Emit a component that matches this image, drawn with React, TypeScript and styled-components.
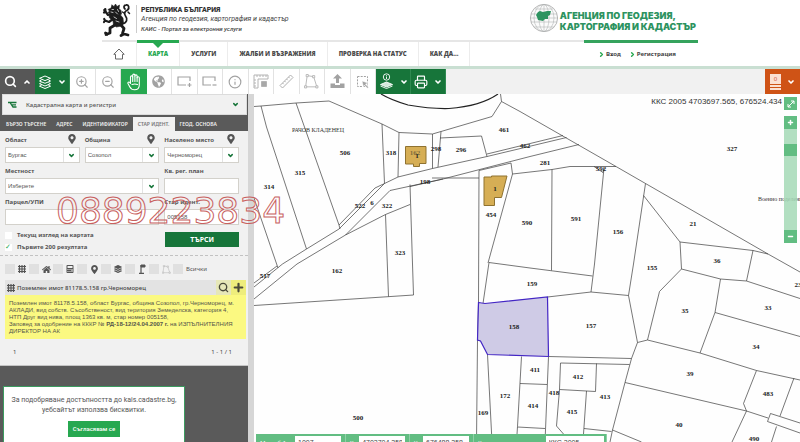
import React from "react";
import styled, { createGlobalStyle, css } from "styled-components";
import {
  ChevronDown, ChevronUp, ChevronRight, Search, ZoomIn, ZoomOut, Info, Printer, Plus, Minus,
} from "lucide-react";
import {
  FaGlobeAmericas, FaHome, FaMapMarkerAlt, FaCalculator, FaLayerGroup,
} from "react-icons/fa";

const GlobalStyle = createGlobalStyle`
  *, *::before, *::after { box-sizing: border-box; }
  body { margin: 0; background: #fff; color: #444; font-family: "Noto Sans", sans-serif; font-size: 7px; overflow: hidden; }
  button, input, select { font: inherit; color: inherit; margin: 0; padding: 0; border-radius: 0; }
  a { color: inherit; text-decoration: none; }
  svg { display: block; flex: none; }
`;

const green = "#17753a";
const bright = "#27a850";
const soft = "#62bd82";

const Page = styled.div`
  position: relative;
  display: flex;
  flex-direction: column;
  height: 100vh;
`;

/* ---------- header ---------- */
const Header = styled.header`
  border-bottom: 3px solid #c9dfd2;
`;
const HeaderInner = styled.div`
  max-width: 596px;
  margin: 0 auto;
`;
const BrandRow = styled.div`
  display: flex;
  justify-content: space-between;
  height: 40px;
`;
const Brand = styled.a`
  display: flex;
  align-items: flex-start;
`;
const BrandText = styled.span`
  display: flex;
  flex-direction: column;
  margin: 5px 0 0 4px;
  padding-left: 4px;
  border-left: 1px solid #ccc;
  font-family: Roboto, sans-serif;
  line-height: 9px;
  color: #444;
`;
const BrandTitle = styled.strong`
  font-size: 7px;
  line-height: 10px;
  font-weight: 900;
  color: #333;
`;
const BrandLine = styled.span<{ $small?: boolean }>`
  font-size: ${(p) => (p.$small ? 6 : 7)}px;
  font-weight: ${(p) => (p.$small ? 500 : 400)};
  font-style: italic;
`;
const AgencyText = styled.strong`
  padding-top: 10px;
  margin: 0 2px 0 1px;
  font-family: Inter, sans-serif;
  font-size: 9px;
  font-weight: 900;
  line-height: 11px;
  color: #2d9360;
`;
const Rule = styled.div`
  display: flex;
  justify-content: flex-end;
  height: 2px;
  background: #e6e6e6;
`;
const RuleAccent = styled.span`
  width: 114px;
  height: 3px;
  background: #35a35d;
`;
const Nav = styled.nav`
  display: flex;
  align-items: stretch;
  height: 24px;
`;
const NavItem = styled.a<{ $active?: boolean }>`
  position: relative;
  display: flex;
  align-items: center;
  padding: 0 11px;
  border-right: 1px solid #ececec;
  font-family: "Open Sans", sans-serif;
  font-size: 6px;
  font-weight: 800;
  white-space: nowrap;
  color: ${(p) => (p.$active ? bright : "#4a4a4a")};
  ${(p) =>
    p.$active &&
    css`
      &::before {
        content: "";
        position: absolute;
        left: 0;
        right: 0;
        top: -2px;
        height: 3px;
        background: ${bright};
      }
      &::after {
        content: "";
        position: absolute;
        left: calc(50% - 5px);
        top: 1px;
        border: 5px solid transparent;
        border-top-color: ${bright};
        border-bottom: 0;
      }
    `}
`;
const Account = styled.div`
  display: flex;
  align-items: center;
  gap: 8px;
  margin-left: auto;
  padding-right: 22px;
`;
const AccountLink = styled.a`
  display: flex;
  align-items: center;
  gap: 1px;
  font-size: 6px;
  font-weight: 700;
  svg { color: ${bright}; }
`;

/* ---------- toolbar ---------- */
const Toolbar = styled.div`
  display: flex;
  height: 25px;
  background: #f1f1f1;
`;
const Tools = styled.div`
  display: grid;
  grid-template-columns: repeat(12, 1fr);
  width: 306px;
`;
const tones = {
  plain: css`background: #fff; color: #a2a2a2; border-right: 1px solid #e2e2e2;`,
  active: css`background: ${bright}; color: #fff;`,
  dark: css`background: #575757; color: #fff;`,
  green: css`background: ${green}; color: #fff; border-right: 1px solid #2f8a51;`,
  orange: css`background: #cf5316; color: #fff; margin-left: auto;`,
};
const ToolButton = styled.button<{ $tone: keyof typeof tones }>`
  display: flex;
  align-items: center;
  justify-content: center;
  border: 0;
  ${(p) => tones[p.$tone]}
`;
const MenuButton = styled(ToolButton)`
  width: 35px;
  gap: 6px;
  flex: none;
`;
const Badge = styled.span`
  display: flex;
  flex-direction: column;
  gap: 1px;
  width: 11px;
  font-size: 6px;
  line-height: 10px;
  color: #d0533a;
  b { background: #fbe0d3; font-weight: 400; }
  i { height: 2px; background: #fbe0d3; }
`;

/* ---------- sidebar ---------- */
const Body = styled.div`
  display: flex;
  flex: 1;
  min-height: 0;
`;
const Sidebar = styled.aside`
  width: 248px;
  flex: none;
  background: #5a5a5a;
`;
const Gutter = styled.div`
  width: 6px;
  flex: none;
  background: #d6d6d6;
`;
const SourcePicker = styled.button`
  display: flex;
  align-items: center;
  gap: 9px;
  width: calc(100% - 3px);
  height: 21px;
  margin: 0 1px 0 2px;
  padding: 0 7px 0 5px;
  border: 1px solid #dcdcdc;
  background: #f1f1f1;
  font-size: 6px;
  font-weight: 500;
  color: #555;
  svg:last-child { margin-left: auto; color: ${green}; }
`;
const Tabs = styled.div`
  display: flex;
  align-items: stretch;
  height: 16px;
  padding: 2px 0 0 1px;
`;
const Tab = styled.button<{ $active?: boolean }>`
  padding: 0 5px;
  border: 0;
  font-size: 5px;
  font-weight: 600;
  white-space: nowrap;
  background: ${(p) => (p.$active ? "#f1f1f1" : "transparent")};
  color: ${(p) => (p.$active ? "#777" : "#f0f0f0")};
`;
const Panel = styled.div`
  padding-bottom: 4px;
  background: #f1f1f1;
  border-bottom: 1px solid #c4c4c4;
`;
const Form = styled.form`
  display: grid;
  grid-template-columns: repeat(3, 1fr);
  gap: 2px 5px;
  padding: 3px 9px 2px 5px;
  border-bottom: 1px dashed #c2c2c2;
`;
const Field = styled.div<{ $wide?: boolean }>`
  display: flex;
  flex-direction: column;
  gap: 1px;
  grid-column: span ${(p) => (p.$wide ? 2 : 1)};
  min-width: 0;
`;
const FieldHead = styled.label`
  display: flex;
  justify-content: space-between;
  align-items: center;
  height: 12px;
  padding-right: 3px;
  font-size: 6px;
  font-weight: 700;
  color: #555;
  svg { align-self: flex-start; }
`;
const control = css`
  grid-area: 1 / 1;
  width: 100%;
  height: 16px;
  padding: 0 2px;
  border: 1px solid #d3d1cb;
  background: #fff;
  font-family: "Liberation Sans", sans-serif;
  font-size: 6px;
  color: #555;
`;
const TextInput = styled.input`
  ${control}
`;
const SelectWrap = styled.span`
  display: grid;
  align-items: center;
`;
const Select = styled.select`
  ${control}
  appearance: none;
`;
const SelectArrow = styled.span`
  grid-area: 1 / 1;
  justify-self: end;
  display: flex;
  align-items: center;
  justify-content: center;
  width: 17px;
  height: 14px;
  border-left: 1px solid #e2e2e2;
  color: ${green};
  pointer-events: none;
`;
const Checks = styled.div`
  grid-column: span 2;
  padding-top: 2px;
`;
const CheckLabel = styled.label`
  display: flex;
  align-items: center;
  gap: 5px;
  height: 12px;
  font-size: 6px;
  font-weight: 700;
  color: #555;
`;
const CheckBox = styled.input<{ $grey?: boolean }>`
  appearance: none;
  width: ${(p) => (p.$grey ? 10 : 7)}px;
  height: ${(p) => (p.$grey ? 10 : 7)}px;
  flex: none;
  background: ${(p) => (p.$grey ? "#e0e0e0" : "#fff")};
  &:checked::before {
    content: "✓";
    display: block;
    font: 700 7px/7px "DejaVu Sans", sans-serif;
    color: ${bright};
  }
`;
const Submit = styled.button`
  height: 15px;
  margin: 5px 0 0 1px;
  border: 0;
  background: ${green};
  color: #fff;
  font-weight: 700;
  font-size: 7px;
`;
const Filters = styled.div`
  display: flex;
  align-items: center;
  height: 24px;
  padding: 2px 5px 0;
`;
const Filter = styled.label`
  display: flex;
  align-items: center;
  gap: 3px;
  width: 24px;
  font-size: 6px;
  color: #555;
`;
const Result = styled.article`
  margin: 0 2px 0 5px;
`;
const ResultHead = styled.header`
  display: flex;
  align-items: center;
  height: 15px;
  padding-left: 2px;
  background: #e3e3e3;
`;
const ResultTitle = styled.h2`
  flex: 1;
  margin: 0 0 0 2px;
  font-size: 6px;
  font-weight: 500;
  color: #444;
`;
const ResultAction = styled.button<{ $lit?: boolean }>`
  display: flex;
  align-items: center;
  justify-content: center;
  width: 15px;
  height: 15px;
  border: 0;
  background: ${(p) => (p.$lit ? "#eeed7c" : "#e6e7b8")};
  color: #4a4a3a;
`;
const ResultBody = styled.p`
  margin: 0;
  padding: 5px 4px 4px;
  background: #fbf981;
  font-family: "Liberation Sans", sans-serif;
  font-size: 6px;
  line-height: 7px;
  color: #55554a;
`;
const Pager = styled.div`
  display: flex;
  justify-content: space-between;
  padding: 8px 16px 4px 13px;
  line-height: 10px;
  font-size: 6px;
`;

/* ---------- overlays ---------- */
const Cookie = styled.section`
  position: absolute;
  left: 3px;
  bottom: -6px;
  width: 182px;
  padding: 8px 4px 10px;
  border: 1px solid #3c9b60;
  background: #fff;
  text-align: center;
  font-family: Roboto, sans-serif;
  font-size: 7px;
  line-height: 10px;
  color: #555;
  p { margin: 0 0 6px; }
`;
const CookieButton = styled.button`
  width: 52px;
  height: 16px;
  border: 0;
  background: ${bright};
  color: #fff;
  font-size: 6px;
  font-weight: 500;
`;
const Phone = styled.div`
  position: absolute;
  left: 56px;
  top: 190px;
  font-family: "DejaVu Sans", sans-serif;
  font-size: 36px;
  line-height: 41px;
  color: transparent;
  -webkit-text-stroke: 1px #c8605e;
  pointer-events: none;
`;

/* ---------- map ---------- */
const MapArea = styled.main`
  position: relative;
  flex: 1;
  min-width: 0;
  overflow: hidden;
  background: #fefefe;
`;
const MapSvg = styled.svg`
  width: 100%;
  height: 100%;
  font-family: "Liberation Serif", serif;
  text-anchor: middle;
`;
const ParcelNumber = styled.text`
  font-size: 7px;
  font-weight: 700;
  fill: #222;
`;
const PlaceName = styled.text`
  font-size: 6px;
  fill: #333;
`;
const Coordinates = styled.output`
  position: absolute;
  top: 3px;
  right: 18px;
  font-family: "Liberation Sans", sans-serif;
  font-size: 8px;
  line-height: 10px;
  color: #333;
`;
const ZoomBar = styled.div`
  position: absolute;
  top: 3px;
  right: 3px;
  width: 13px;
`;
const ZoomButton = styled.button<{ $gap?: boolean }>`
  display: flex;
  align-items: center;
  justify-content: center;
  width: 13px;
  height: 13px;
  margin-bottom: ${(p) => (p.$gap ? 6 : 0)}px;
  border: 0;
  background: ${soft};
  color: #fff;
`;
const ZoomTrack = styled.div`
  height: 101px;
  padding-top: 15px;
  background: #a5d9b6d9;
`;
const ZoomHandle = styled.div`
  height: 12px;
  background: ${soft};
`;
const StatusBar = styled.div`
  position: absolute;
  left: 2px;
  bottom: -9px;
  display: grid;
  grid-template-columns: 90px 64px 64px 133px;
  height: 17px;
  background: ${soft};
  color: #fff;
  font-size: 6px;
`;
const StatusCell = styled.label`
  display: flex;
  align-items: center;
  justify-content: space-between;
  gap: 4px;
  padding: 1px 4px;
  border-right: 1px solid #8fd0a6;
  white-space: nowrap;
`;
const StatusInput = styled.input<{ $wide?: boolean }>`
  width: ${(p) => (p.$wide ? 58 : 46)}px;
  height: 13px;
  padding: 0 3px;
  border: 0;
  background: #fff;
  color: #444;
  font-family: "Liberation Sans", sans-serif;
  font-size: 7px;
`;

/* ---------- drawings ---------- */
const Lion = () => (
  <svg width="30" height="38" viewBox="0 0 30 38" fill="#1c1c1c" stroke="#1c1c1c" strokeLinecap="round" strokeLinejoin="round">
    <path d="M10 5l2 1.500L13.500 4l1.500 2.500L17.500 5l-.5 3.500 2 2 .5 3.500-1 1 2.500 3 .5 5-2 3-5 1-3-2-.5-4-2-1.500L7 17l1-3-2-1.500L7.500 11 6 9.500 9 8z" strokeWidth=".6" />
    <path d="M10 14L6 15 3.500 11.500M3.500 11.500L2.200 10M3.500 11.500l-.2-2.500M3.500 11.500L2 12.500M11 19l-4 3-4-1.500M3 20.500L2.200 19M3 20.500l-1 1.500" fill="none" strokeWidth="2.200" />
    <path d="M13 25l-5 3v5l-4 1.500M5 34.500l-1.500-1.500M19 25l3 3.500-1.500 5 5.500 1.500M21 34.500l-2 1" fill="none" strokeWidth="2.800" />
    <path d="M20 24c5-1 6-5 3.500-8-2-2.500-.5-5 2-6 2.500-2 1-5.500-1.500-5-2.500.3-2.500 3-1 4" fill="none" strokeWidth="1.800" />
    <path d="M26 12l1.500 1.500M22 13l-1.500-1" fill="none" strokeWidth="1.500" />
    <path d="M10 9.500h1.500M9 12l2 .5M13.500 12l2 2M12 17l2.500 1.500M14 21l3 1M15.500 9.500l1 2" fill="none" stroke="#fff" strokeWidth=".7" />
  </svg>
);

const Globe = () => (
  <svg width="30" height="34" viewBox="0 0 30 34" fill="none" stroke="#b2b6b5" strokeWidth=".6">
    <circle cx="15" cy="18" r="13.600" fill="#fbfbfb" stroke="#888" />
    <ellipse cx="15" cy="18" rx="5" ry="13.600" />
    <ellipse cx="15" cy="18" rx="10" ry="13.600" />
    <path d="M15 4v28M2 14h26M1.500 18h27M2 22h26M5 27h20M6 9h18" />
    <path d="M9 12l2-1 3 1 4-1h4l-1 4-2 1v3h-3l-2 2-5-1-1-3-1-2z" fill="#2d9360" stroke="none" />
  </svg>
);

const GridIcon = () => (
  <svg width="8" height="8" viewBox="0 0 8 8" stroke="#555" strokeWidth="1.200">
    <path d="M1.500 0v8M4 0v8M6.500 0v8M0 1.500h8M0 4h8M0 6.500h8" />
  </svg>
);
const PlotIcon = ({ size = 15 }: { size?: number }) => (
  <svg width={size} height={size} viewBox="0 0 14 14" fill="none" stroke="#b0b0b0" strokeWidth=".8">
    <path d="M3 1.500L9 2.500 12 12 1.500 12z" />
    <path d="M2 .5h2v2H2zM8 1.500h2v2H8zM11 11h2v2h-2zM.5 11h2v2h-2z" fill="#fff" />
  </svg>
);
const FlagIcon = () => (
  <svg width="8" height="10" viewBox="0 0 8 10" fill="none" stroke="#555">
    <path d="M3 9V1M1 9.400h5" strokeWidth="1.200" />
    <path d="M3 1h4v2H3z" fill="#555" />
  </svg>
);
const AreaIcon = ({ minus }: { minus?: boolean }) => (
  <svg width="15" height="13" viewBox="0 0 15 13" fill="none" stroke="#a2a2a2" strokeWidth="1.200">
    <path d="M13 6V2H1v8h8" />
    <path d={minus ? "M10.500 10h4" : "M10.500 10h4M12.500 8v4"} />
  </svg>
);
const HandIcon = () => (
  <svg width="14" height="18" viewBox="0 0 14 18" fill="none" stroke="#fff" strokeWidth="1.100" strokeLinejoin="round" strokeLinecap="round">
    <path d="M3.500 9V4a1.100 1.100 0 0 1 2.200 0V2.200a1.100 1.100 0 0 1 2.200 0V3a1.100 1.100 0 0 1 2.200 0v1.800a1.100 1.100 0 0 1 2.200 0V12c0 3-2 4.800-4.800 4.800-2.500 0-3.800-1-4.800-3L1 10.500c-.5-1.300 1-2 1.800-1l.7 1z" />
    <path d="M5.700 4v4.500M7.900 3v5.500M10.100 4.500v4M5 11.500c2-.8 3.500-.8 5.500 0" />
  </svg>
);
const RulersIcon = () => (
  <svg width="16" height="15" viewBox="0 0 16 15" fill="none" stroke="#b4b4b4">
    <path d="M1 1h14v4H5v9H1zM4 1v2M7 1v2M10 1v2M13 1v2M1 6h2M1 9h2M1 12h2" />
    <path d="M8.500 7.500h5v5h-5z" fill="#a8a8a8" />
  </svg>
);
const RulerIcon = () => (
  <svg width="15" height="15" viewBox="0 0 15 15" fill="none" stroke="#b0b0b0">
    <path d="M1 11.500L11.500 1 14 3.500 3.500 14zM3.500 9l1.200 1.200M5.500 7l1.200 1.200M7.500 5l1.200 1.200M9.500 3l1.200 1.200" />
  </svg>
);
const UploadIcon = () => (
  <svg width="15" height="15" viewBox="0 0 15 15" fill="#a2a2a2">
    <path d="M7.500 0L12 4.500H9V9H6V4.500H3zM.5 9.500H5v1.500h5V9.500h4.500V14H.5z" />
  </svg>
);
const MarqueeIcon = () => (
  <svg width="14" height="14" viewBox="0 0 14 14" fill="none" stroke="#a2a2a2">
    <path d="M1.500 1.500h10v10h-10z" strokeDasharray="2 1.200" />
    <path d="M6 6l6 2-2.500 1.200 3 3-1 1-3-3L7.500 12z" fill="#a2a2a2" stroke="#fff" strokeWidth=".5" />
  </svg>
);
const StackIcon = () => (
  <svg width="14" height="14" viewBox="0 0 14 14" fill="none" stroke="#fff" strokeLinejoin="round">
    <path d="M7 1l5.500 2.300L7 5.600 1.500 3.300zM3.500 5L1.500 6 7 8.300 12.500 6l-2-1M3.500 7.700l-2 1L7 11l5.500-2.300-2-1M3.500 10.300l-2 .9L7 13.500l5.500-2.300-2-.9" />
  </svg>
);
const LayerInfoIcon = () => (
  <svg width="15" height="17" viewBox="0 0 15 17" fill="none" stroke="#fff" strokeWidth=".9">
    <circle cx="7.500" cy="4" r="3.200" />
    <path d="M7.500 3.500v2.500M7.500 2v.8" />
    <path d="M7.500 9l6 2.500-6 2.500-6-2.500z" fill="#d4e8db" />
    <path d="M1.500 13l6 2.500 6-2.500" />
  </svg>
);
const HomeIcon = () => (
  <svg width="12" height="12" viewBox="0 0 12 12" fill="none" stroke="#666">
    <path d="M.8 6.300L6 1l5.200 5.300H9.500V11h-7V6.300z" />
  </svg>
);
const BranchIcon = () => (
  <svg width="9" height="8" viewBox="0 0 9 8" fill="none" stroke={green} strokeWidth="1.300">
    <path d="M0 1.500h8.500M2 1.500l3 4.500h3.500M4 3.800h4" />
  </svg>
);

const parcels = [
  "254,106.500 261,106 296,103 329,101 382,124 399,132.500 432.500,134 441,131.500 492,116.500 501.500,101.500 500.500,94",
  "501.500,101.500 520,111.500 616,166.500 645.500,183.500 768,254 800,272",
  "261,106 266.500,127 306.500,249", "296,103 339,225 340,229", "254,198 278,268",
  "382,124 384.500,183.500 375,188 339,225", "384.500,183.500 339,229 306.500,249 282.500,264 254,287",
  "254,283 277,266", "384.500,183.500 398,177 432.500,168.500 487,156.500 566.500,137.500", "487,154 563,135.500",
  "345.500,235 390,190.500 443,179 530,156.500 579,144.500", "345.500,235 297,264 254,299",
  "432,178 479,178", "410,186.500 443,179", "410,184.500 412.500,264 413.500,295 254,305.500",
  "345.500,235 385.500,214.500 410,204.500", "385.500,214.500 388.500,296.500",
  "399,132.500 398,177", "432.500,134 432.500,168.500", "441,131.500 438,167", "440,138 481.500,136 487,156.500",
  "479,170.500 511,163 512.500,174 488,263", "479,170.500 478.500,302.500 477.500,340 476.500,442",
  "512.500,174 552,169.500 570,166.500 616,166.500", "552,169.500 551.500,270.500", "594,166.500 603,172.500 604,168 594.500,264 591,292",
  "645.500,183.500 633.500,264 628.500,295.500", "643.500,195.500 680,242 753,250.500 768,254", "680,242 681.500,269 659.500,291.500 647.500,340",
  "753,250.500 746.500,281", "483,303.500 489,262.500 530,268 592.500,276",
  "547.500,297 591,292 628.500,295.500 637.500,342.500 647.500,340 700,353 756.500,370.500 800,380",
  "681.500,269 720.500,279 746.500,281 800,298.500", "720.500,279 715,312.500 700,353", "715,312.500 800,336.500",
  "637.500,342.500 631.500,358.500 625,382.500 612.500,430 610,442", "548.500,356.500 631.500,358.500", "560.500,363 629.500,364.500",
  "560.500,363 559.500,389.500 595.500,391.500 596.500,363.500", "559.500,389.500 556.500,426 563.500,434", "586.500,391 583.500,434",
  "584,428.500 611.500,431.500", "612.500,430 641.500,442", "521.500,356.500 517.500,426.500 516.500,442", "548.500,356.500 545,442",
  "520,383.500 547,384.500", "517.500,427 545,428.500", "487.500,354.500 492,442",
  "625,382.500 746.500,411 768,418", "756.500,370.500 743.500,403.500 746.500,411 732,442", "794,378 780,416",
  "800,423 770.500,413.500 767.500,421.500 800,433", "776.500,426.500 771.500,442",
];

const labels: [number, number, string][] = [
  [345, 152, "506"], [300, 172, "315"], [269, 186, "314"], [391, 152, "318"], [436, 148, "298"],
  [461, 149, "296"], [504, 129, "461"], [525, 145, "462"], [545, 162, "281"], [601, 168, "592"], [732, 148, "327"],
  [425, 181, "198"], [360, 205, "522"], [372, 202, "6"], [387, 205, "322"], [491, 214, "454"], [527, 222, "590"],
  [576, 218, "591"], [618, 231, "156"], [693, 223, "21"], [400, 252, "323"], [717, 260, "36"], [337, 270, "162"],
  [265, 275, "517"], [532, 283, "159"], [652, 267, "155"], [798, 284, "23"], [768, 307, "33"], [685, 310, "35"],
  [591, 325, "157"], [514, 326, "158"], [756, 346, "34"], [690, 373, "39"], [535, 369, "411"], [578, 376, "412"],
  [554, 392, "418"], [605, 396, "413"], [505, 395, "172"], [768, 393, "483"], [533, 405, "414"], [572, 411, "415"],
  [483, 412, "169"], [358, 417, "500"], [679, 424, "40"], [754, 438, "490"], [495, 188, "1"],
];

const CadastralMap = () => (
  <MapSvg viewBox="254 94 546 348" preserveAspectRatio="xMinYMin slice" role="img" aria-label="Кадастрална карта">
    <g fill="none" stroke="#3c3c3c" strokeWidth=".7">
      {parcels.map((p) => <polyline key={p} points={p} />)}
    </g>
    <path d="M381 94Q391 100 408 105Q431 109 449 108.500Q481 106 498 94" fill="none" stroke="#222" strokeWidth="1.200" />
    <polygon points="478.500,302.500 485,303.500 547.500,297 548.500,356.500 487.500,354.500 480.500,341 477.500,340" fill="#cfcbe6" stroke="#4326c4" strokeWidth="1.200" />
    <g fill="#d6ae55" stroke="#8f7230">
      <polygon points="405.500,146.500 426,146.500 426,163.500 419.500,163.500 419.500,166.500 413.500,166.500 413.500,164 405.500,164" />
      <polygon points="484,177 491.500,177 491.500,176 507,176 501.500,197.500 494.500,197.500 494.500,205.500 484,205.500" />
    </g>
    <ParcelNumber x="415" y="155" fillOpacity=".5">162</ParcelNumber>
    <ParcelNumber x="417" y="158">1</ParcelNumber>
    {labels.map(([x, y, t]) => <ParcelNumber key={`${x}-${y}`} x={x} y={y + 3}>{t}</ParcelNumber>)}
    <PlaceName x="318" y="132">РАЧОВ КЛАДЕНЕЦ</PlaceName>
    <PlaceName x="758" y="201" textAnchor="start">Военно поделение</PlaceName>
  </MapSvg>
);

const SelectField = ({ id, label, value, wide, pin }: { id: string; label: string; value: string; wide?: boolean; pin?: boolean }) => (
  <Field $wide={wide}>
    <FieldHead htmlFor={id}>{label}{pin && <FaMapMarkerAlt size={10} />}</FieldHead>
    <SelectWrap>
      <Select id={id} defaultValue={value}><option>{value}</option></Select>
      <SelectArrow><ChevronDown size={7} strokeWidth={5} /></SelectArrow>
    </SelectWrap>
  </Field>
);
const TextField = ({ id, label, value, wide }: { id: string; label: string; value?: string; wide?: boolean }) => (
  <Field $wide={wide}>
    <FieldHead htmlFor={id}>{label}</FieldHead>
    <TextInput id={id} defaultValue={value} />
  </Field>
);

const filters: [string, React.ReactNode][] = [
  ["Имоти", <GridIcon />], ["Сгради", <FaHome size={9} />], ["Обекти", <FaCalculator size={8} />],
  ["Адреси", <FaMapMarkerAlt size={9} />], ["Слоеве", <FaLayerGroup size={8} />], ["Точки", <FlagIcon />],
  ["Контури", <PlotIcon size={9} />],
];

export default function App() {
  return (
    <Page lang="bg">
      <GlobalStyle />
      <Header>
        <HeaderInner>
          <BrandRow>
            <Brand href="#">
              <Lion />
              <BrandText>
                <BrandTitle>РЕПУБЛИКА БЪЛГАРИЯ</BrandTitle>
                <BrandLine>Агенция по геодезия, картография и кадастър</BrandLine>
                <BrandLine $small>КАИС - Портал за електронни услуги</BrandLine>
              </BrandText>
            </Brand>
            <Brand href="#">
              <Globe />
              <AgencyText>АГЕНЦИЯ ПО ГЕОДЕЗИЯ,<br />КАРТОГРАФИЯ И КАДАСТЪР</AgencyText>
            </Brand>
          </BrandRow>
          <Rule><RuleAccent /></Rule>
          <Nav>
            <NavItem href="#" aria-label="Начало"><HomeIcon /></NavItem>
            <NavItem href="#" $active>КАРТА</NavItem>
            <NavItem href="#">УСЛУГИ</NavItem>
            <NavItem href="#">ЖАЛБИ И ВЪЗРАЖЕНИЯ</NavItem>
            <NavItem href="#">ПРОВЕРКА НА СТАТУС</NavItem>
            <NavItem href="#">КАК ДА...</NavItem>
            <Account>
              <AccountLink href="#"><ChevronRight size={7} strokeWidth={5} />Вход</AccountLink>
              <AccountLink href="#"><ChevronRight size={7} strokeWidth={5} />Регистрация</AccountLink>
            </Account>
          </Nav>
        </HeaderInner>
      </Header>

      <Toolbar>
        <MenuButton $tone="dark" aria-label="Търсене"><Search size={13} strokeWidth={3} /><ChevronUp size={8} strokeWidth={5} /></MenuButton>
        <MenuButton $tone="green" aria-label="Слоеве"><StackIcon /><ChevronDown size={8} strokeWidth={5} /></MenuButton>
        <Tools>
          <ToolButton $tone="plain" aria-label="Приближи"><ZoomIn size={14} /></ToolButton>
          <ToolButton $tone="plain" aria-label="Отдалечи"><ZoomOut size={14} /></ToolButton>
          <ToolButton $tone="active" aria-label="Местене"><HandIcon /></ToolButton>
          <ToolButton $tone="plain" aria-label="Цяла карта"><FaGlobeAmericas size={13} /></ToolButton>
          <ToolButton $tone="plain" aria-label="Добави област"><AreaIcon /></ToolButton>
          <ToolButton $tone="plain" aria-label="Махни област"><AreaIcon minus /></ToolButton>
          <ToolButton $tone="plain" aria-label="Информация"><Info size={14} /></ToolButton>
          <ToolButton $tone="plain" aria-label="Мерки"><RulersIcon /></ToolButton>
          <ToolButton $tone="plain" aria-label="Разстояние"><RulerIcon /></ToolButton>
          <ToolButton $tone="plain" aria-label="Площ"><PlotIcon /></ToolButton>
          <ToolButton $tone="plain" aria-label="Качване"><UploadIcon /></ToolButton>
          <ToolButton $tone="plain" aria-label="Избор"><MarqueeIcon /></ToolButton>
        </Tools>
        <MenuButton $tone="green" aria-label="Информация за слой"><LayerInfoIcon /><ChevronDown size={8} strokeWidth={5} /></MenuButton>
        <MenuButton $tone="green" aria-label="Печат"><Printer size={14} /><ChevronDown size={8} strokeWidth={5} /></MenuButton>
        <MenuButton $tone="orange" aria-label="Заявки"><Badge><b>0</b><i /><i /></Badge><ChevronDown size={8} strokeWidth={5} /></MenuButton>
      </Toolbar>

      <Body>
        <Sidebar>
          <SourcePicker><BranchIcon />Кадастрална карта и регистри<ChevronDown size={7} strokeWidth={5} /></SourcePicker>
          <Tabs>
            <Tab>БЪРЗО ТЪРСЕНЕ</Tab><Tab>АДРЕС</Tab><Tab>ИДЕНТИФИКАТОР</Tab><Tab $active>СТАР ИДЕНТ.</Tab><Tab>ГЕОД. ОСНОВА</Tab>
          </Tabs>
          <Panel>
            <Form onSubmit={(e) => e.preventDefault()}>
              <SelectField id="oblast" label="Област" value="Бургас" pin />
              <SelectField id="obshtina" label="Община" value="Созопол" pin />
              <SelectField id="place" label="Населено място" value="Черноморец" pin />
              <SelectField id="area" label="Местност" value="Изберете" wide />
              <TextField id="plan" label="Кв. рег. план" />
              <TextField id="parcel" label="Парцел/УПИ" wide />
              <TextField id="old" label="Стар идент." value="005158" />
              <Checks>
                <CheckLabel><CheckBox type="checkbox" />Текущ изглед на картата</CheckLabel>
                <CheckLabel><CheckBox type="checkbox" defaultChecked />Първите 200 резултата</CheckLabel>
              </Checks>
              <Submit>ТЪРСИ</Submit>
            </Form>
            <Filters>
              {filters.map(([name, icon]) => (
                <Filter key={name}><CheckBox type="checkbox" $grey aria-label={name} />{icon}</Filter>
              ))}
              <Filter><CheckBox type="checkbox" $grey />Всички</Filter>
            </Filters>
            <Result>
              <ResultHead>
                <GridIcon />
                <ResultTitle>Поземлен имот 81178.5.158 гр.Черноморец</ResultTitle>
                <ResultAction aria-label="Покажи"><Search size={11} strokeWidth={3} /></ResultAction>
                <ResultAction $lit aria-label="Добави"><Plus size={13} strokeWidth={4} /></ResultAction>
              </ResultHead>
              <ResultBody>
                Поземлен имот 81178.5.158, област Бургас, община Созопол, гр.Черноморец, м. АКЛАДИ, вид собств. Съсобственост, вид територия Земеделска, категория 4, НТП Друг вид нива, площ 1363 кв. м, стар номер 005158,<br />
                Заповед за одобрение на КККР № <b>РД-18-12/24.04.2007 г.</b> на ИЗПЪЛНИТЕЛНИЯ ДИРЕКТОР НА АК
              </ResultBody>
            </Result>
            <Pager><span>1</span><span>1 - 1 / 1</span></Pager>
          </Panel>
        </Sidebar>
        <Gutter />
        <MapArea>
          <CadastralMap />
          <Coordinates>ККС 2005 4703697.565, 676524.434</Coordinates>
          <ZoomBar>
            <ZoomButton $gap aria-label="Цял екран">
              <svg width="8" height="8" viewBox="0 0 8 8" fill="none" stroke="#fff"><path d="M1 7l6-6M4 1h3v3M1 4v3h3" /></svg>
            </ZoomButton>
            <ZoomButton aria-label="Приближи"><Plus size={7} strokeWidth={5} /></ZoomButton>
            <ZoomTrack><ZoomHandle /></ZoomTrack>
            <ZoomButton aria-label="Отдалечи"><Minus size={7} strokeWidth={5} /></ZoomButton>
          </ZoomBar>
          <StatusBar>
            <StatusCell>Мащаб 1:<StatusInput defaultValue="1007" /></StatusCell>
            <StatusCell>X:<StatusInput defaultValue="4703704.358" /></StatusCell>
            <StatusCell>Y:<StatusInput defaultValue="676488.358" /></StatusCell>
            <StatusCell>Координатна система<StatusInput $wide defaultValue="ККС 2005" /></StatusCell>
          </StatusBar>
        </MapArea>
      </Body>

      <Cookie aria-label="Бисквитки">
        <p>За подобряване достъпността до kais.cadastre.bg, уебсайтът използва бисквитки.</p>
        <CookieButton>Съгласявам се</CookieButton>
      </Cookie>
      <Phone>0889223834</Phone>
    </Page>
  );
}
